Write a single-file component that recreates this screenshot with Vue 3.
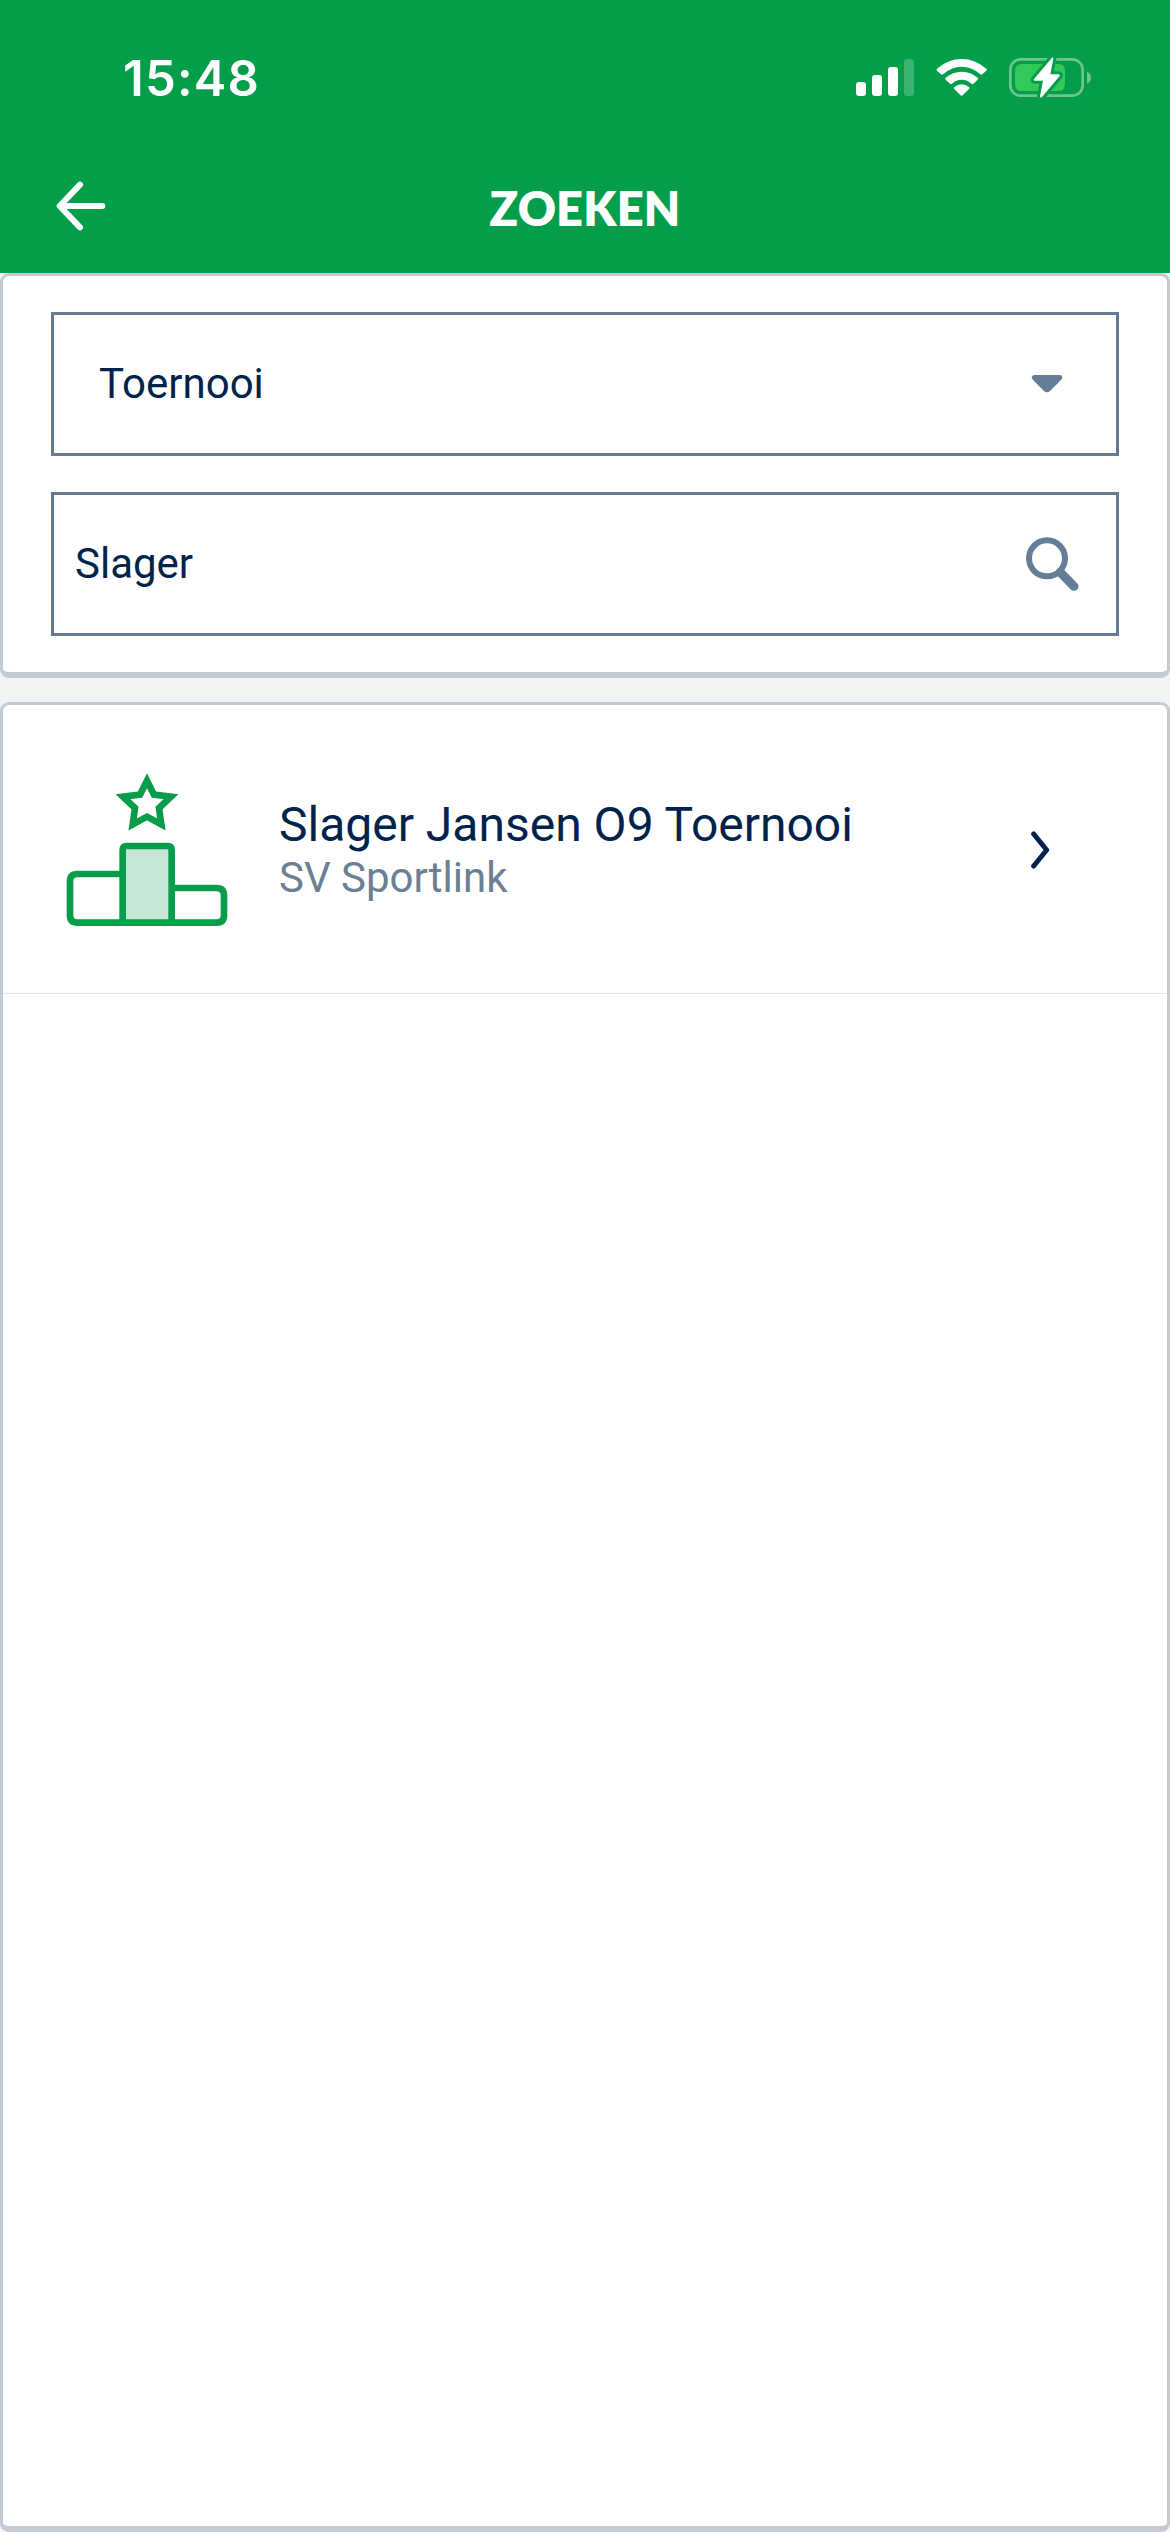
<script setup>
import { ref } from 'vue'

const time = ref('15:48')
const category = ref('Toernooi')
const query = ref('Slager')
const results = ref([{ id: 1, title: 'Slager Jansen O9 Toernooi', club: 'SV Sportlink' }])
</script>

<template>
  <div class="screen">
    <header class="header">
      <div class="status">
        <span class="time">{{ time }}</span>
        <svg class="indicators" viewBox="0 0 810 240">
          <g fill="#fff">
            <rect x="48" y="126" width="30" height="42" rx="9" />
            <rect x="96" y="105" width="30" height="63" rx="9" />
            <rect x="144" y="81" width="30" height="87" rx="9" />
            <rect x="192" y="57" width="30" height="111" rx="9" opacity=".22" />
            <path d="M291 86Q324 57 365 57T439 86Q442 89 439 92L427 103Q424 105 421 103Q396 80 365 80T309 103Q306 105 303 103L291 92Q288 89 291 86Z" />
            <path d="M317 113Q338 95 365 95T413 113Q416 116 413 119L400 131Q397 133 394 131Q382 119 365 119T336 131Q333 133 330 131L317 119Q314 116 317 113Z" />
            <path d="M343 141Q353 133 365 133T387 141Q390 144 387 147L368 166Q365 169 362 166L343 147Q340 144 343 141Z" />
          </g>
          <rect x="511" y="58" width="217" height="109" rx="31" fill="none" stroke="#6fc48f" stroke-width="8" />
          <path d="M741 95Q753 101 753 113T741 131Z" fill="#6fc48f" />
          <rect x="525" y="72" width="150" height="81" rx="19" fill="#34c759" />
          <path d="M636 53L582 117Q579 122 584 122H609L600 168Q600 176 606 171L659 108Q661 103 656 103H631L640 57Q640 49 636 53Z" fill="#fff" stroke="#029e4a" stroke-width="18" paint-order="stroke" stroke-linejoin="round" />
        </svg>
      </div>
      <div class="navbar">
        <svg class="back" viewBox="0 0 300 300">
          <path d="M120 74L59 138L120 202M61 138H187" />
        </svg>
        <h1 class="heading">ZOEKEN</h1>
      </div>
    </header>

    <section class="panel filters">
      <div class="field select">
        <span>{{ category }}</span>
        <svg class="caret" viewBox="0 0 34 22">
          <path d="M4 2H30Q34 3 31 7L20 18Q17 20.500 14 18L3 7Q0 3 4 2Z" />
        </svg>
      </div>
      <div class="field search">
        <span>{{ query }}</span>
        <svg class="magnifier" viewBox="0 0 162 165">
          <circle cx="63" cy="64" r="54" />
          <path class="handle" d="M103 106L144 148" />
        </svg>
      </div>
    </section>

    <section class="panel results">
      <article v-for="item in results" :key="item.id" class="row">
        <svg class="podium" viewBox="0 0 600 540">
          <path class="star" d="M291 62L312 104L363 110L327 144L334 193L291 170L248 193L255 144L219 110L270 104Z" />
          <path class="line" d="M218 342H82Q60 342 60 364V466Q60 488 82 488H500Q522 488 522 466V406Q522 384 500 384H365" />
          <path class="line tall" d="M218 488V270Q218 258 230 258H353Q365 258 365 270V488Z" />
        </svg>
        <div class="info">
          <div class="title">{{ item.title }}</div>
          <div class="club">{{ item.club }}</div>
        </div>
        <svg class="chevron" viewBox="0 0 60 114">
          <path d="M11 9L50 57L11 105" />
        </svg>
      </article>
    </section>
  </div>
</template>

<style>
body {
  margin: 0;
}
</style>

<style scoped>
.screen {
  width: 1170px;
  height: 2532px;
  box-sizing: border-box;
  display: flex;
  flex-direction: column;
  overflow: hidden;
  background: #f2f3f5;
  color: #00234b;
  font-family: Roboto, "Noto Sans", sans-serif;
}
.header {
  height: 273px;
  flex: none;
  background: #029e4a;
  color: #fff;
}
.status {
  height: 160px;
  box-sizing: border-box;
  display: flex;
  justify-content: space-between;
  padding: 40px 60px 0 123px;
}
.time {
  font: 600 49px/77px Inter, sans-serif;
  letter-spacing: 1.2px;
}
.indicators {
  width: 270px;
  height: 80px;
}
.navbar {
  display: grid;
  grid-template-columns: 100px 1fr 100px;
  padding: 0 40px;
}
.back {
  width: 100px;
  height: 100px;
}
.back path {
  fill: none;
  stroke: #fff;
  stroke-width: 18;
  stroke-linecap: round;
  stroke-linejoin: round;
}
.heading {
  margin: 0;
  text-align: center;
  font: 800 47px/96px Lato, sans-serif;
  letter-spacing: 0.2px;
}
.panel {
  box-sizing: border-box;
  border: 3px solid #c3cad4;
  border-bottom-width: 6px;
  border-radius: 9px;
  background: #fff;
}
.filters {
  height: 405px;
  flex: none;
  display: flex;
  flex-direction: column;
  gap: 36px;
  padding: 36px 48px 0;
}
.field {
  height: 144px;
  box-sizing: border-box;
  border: 3px solid #667b90;
  display: flex;
  align-items: center;
  justify-content: space-between;
  font-size: 42px;
}
.field span {
  padding-bottom: 2px;
}
.select {
  padding: 0 52px 0 45px;
}
.search {
  padding: 0 36px 0 21px;
}
.caret {
  width: 34px;
  height: 22px;
  fill: #667d98;
}
.magnifier {
  width: 54px;
  height: 55px;
  fill: none;
  stroke: #667d98;
  stroke-width: 18;
}
.handle {
  stroke-width: 27;
  stroke-linecap: round;
}
.results {
  flex: 1;
  margin-top: 24px;
}
.row {
  height: 289px;
  box-sizing: border-box;
  border-bottom: 1px solid #e2e6eb;
  display: flex;
  align-items: center;
  padding: 0 117px 0 47px;
}
.podium {
  width: 200px;
  height: 180px;
  margin-top: 1px;
}
.star,
.line {
  fill: none;
  stroke: #089c4b;
  stroke-width: 20;
}
.line.tall {
  fill: #c8e6d5;
}
.info {
  flex: 1;
  padding-left: 29px;
}
.title {
  font-size: 48px;
  line-height: 56px;
}
.club {
  font-size: 42px;
  line-height: 49px;
  color: #6b7f95;
}
.chevron {
  width: 20px;
  height: 38px;
  margin-top: 2px;
  fill: none;
  stroke: #00234b;
  stroke-width: 15;
  stroke-linecap: round;
  stroke-linejoin: round;
}
</style>
